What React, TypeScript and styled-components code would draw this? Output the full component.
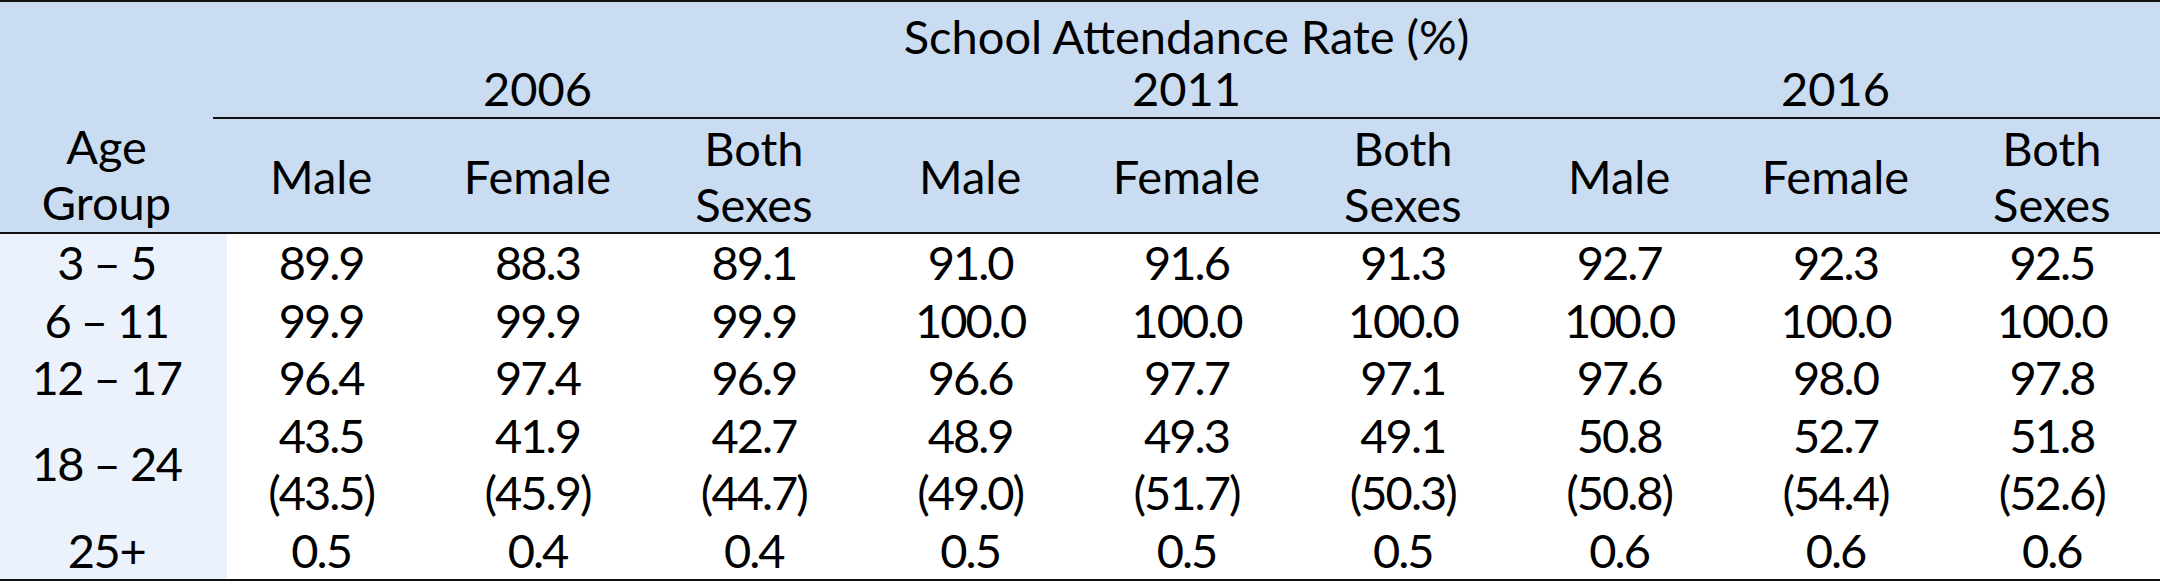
import React from "react";
import styled, { createGlobalStyle } from "styled-components";

const GlobalStyle = createGlobalStyle`
  html, body {
    margin: 0;
    padding: 0;
    background: #ffffff;
  }
  body {
    font-family: "Lato", "Liberation Sans", sans-serif;
    color: #000000;
  }
`;

type Row = {
  age: string;
  values: string[][];
};

const years = ["2006", "2011", "2016"];
const groups = ["Male", "Female", "Both Sexes"];

const rows: Row[] = [
  { age: "3 – 5", values: [["89.9"], ["88.3"], ["89.1"], ["91.0"], ["91.6"], ["91.3"], ["92.7"], ["92.3"], ["92.5"]] },
  { age: "6 – 11", values: [["99.9"], ["99.9"], ["99.9"], ["100.0"], ["100.0"], ["100.0"], ["100.0"], ["100.0"], ["100.0"]] },
  { age: "12 – 17", values: [["96.4"], ["97.4"], ["96.9"], ["96.6"], ["97.7"], ["97.1"], ["97.6"], ["98.0"], ["97.8"]] },
  {
    age: "18 – 24",
    values: [
      ["43.5", "(43.5)"],
      ["41.9", "(45.9)"],
      ["42.7", "(44.7)"],
      ["48.9", "(49.0)"],
      ["49.3", "(51.7)"],
      ["49.1", "(50.3)"],
      ["50.8", "(50.8)"],
      ["52.7", "(54.4)"],
      ["51.8", "(52.6)"],
    ],
  },
  { age: "25+", values: [["0.5"], ["0.4"], ["0.4"], ["0.5"], ["0.5"], ["0.5"], ["0.6"], ["0.6"], ["0.6"]] },
];

const App: React.FC = () => {
  return (
    <>
      <GlobalStyle />
      <Table>
        <colgroup>
          <col style={{ width: 213 }} />
          {Array.from({ length: 9 }).map((_, i) => (
            <col key={i} />
          ))}
        </colgroup>
        <thead>
          <TitleRow>
            <AgeHead rowSpan={3}>
              Age
              <br />
              Group
            </AgeHead>
            <TitleCell colSpan={9}>School Attendance Rate (%)</TitleCell>
          </TitleRow>
          <YearRow>
            {years.map((y) => (
              <YearCell key={y} colSpan={3}>
                {y}
              </YearCell>
            ))}
          </YearRow>
          <SubRow>
            {years.map((y) =>
              groups.map((g) => (
                <SubCell key={y + g}>
                  {g === "Both Sexes" ? (
                    <>
                      Both
                      <br />
                      Sexes
                    </>
                  ) : (
                    g
                  )}
                </SubCell>
              ))
            )}
          </SubRow>
        </thead>
        <tbody>
          {rows.map((r) => (
            <BodyRow key={r.age}>
              <AgeCell>{r.age}</AgeCell>
              {r.values.map((v, vi) => (
                <ValueCell key={vi}>
                  {v.map((line, li) => (
                    <Line key={li}>{line}</Line>
                  ))}
                </ValueCell>
              ))}
            </BodyRow>
          ))}
        </tbody>
      </Table>
    </>
  );
};

const Table = styled.table`
  width: 2160px;
  table-layout: fixed;
  border-collapse: collapse;
  border-spacing: 0;
  font-size: 47px;
  text-align: center;
  border-top: 2px solid #111111;
  border-bottom: 2px solid #111111;

  & td,
  & th {
    padding: 0;
    font-weight: 400;
  }
`;

const TitleRow = styled.tr`
  background: #c9dcf1;
  height: 62px;
`;

const AgeHead = styled.th`
  vertical-align: bottom;
  line-height: 56px;
  padding-bottom: 2px !important;
`;

const TitleCell = styled.th`
  line-height: 56px;
  vertical-align: middle;
  padding-top: 6px !important;
`;

const YearRow = styled.tr`
  background: #c9dcf1;
  height: 54px;
`;

const YearCell = styled.th`
  position: relative;
  line-height: 48px;
  vertical-align: top;

  &::after {
    content: "";
    position: absolute;
    left: 0;
    right: 0;
    bottom: -1px;
    height: 2px;
    background: #111111;
  }
`;

const SubRow = styled.tr`
  background: #c9dcf1;
  border-bottom: 2px solid #111111;
`;

const SubCell = styled.th`
  line-height: 56px;
  vertical-align: middle;
  padding-top: 2px !important;
`;

const BodyRow = styled.tr`
  background: linear-gradient(to right, #ebf2fb 227px, #ffffff 227px);
`;

const AgeCell = styled.td`
  line-height: 57.5px;
  vertical-align: middle;
  letter-spacing: -1.5px;
`;

const ValueCell = styled.td`
  vertical-align: middle;
  letter-spacing: -2px;
`;

const Line = styled.div`
  line-height: 57.5px;
`;

export default App;
